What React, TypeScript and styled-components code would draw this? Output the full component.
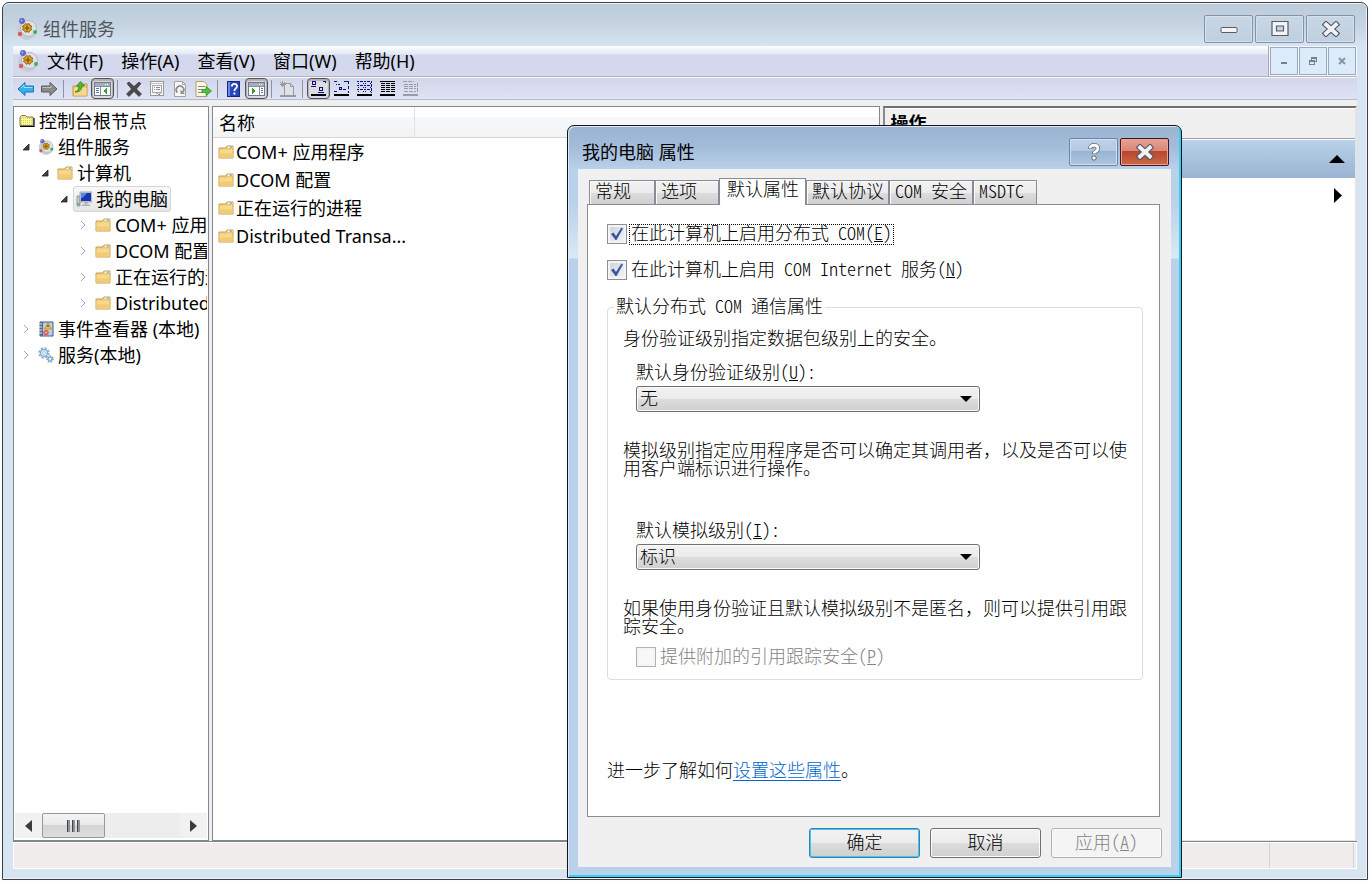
import React from 'react';
import styled, { createGlobalStyle, css } from 'styled-components';

const GlobalStyle = createGlobalStyle`
  *, *::before, *::after { box-sizing: border-box; }
  body {
    margin: 0;
    background: #fdfdfd;
    color: #000;
    font-family: "Noto Sans", "Noto Sans CJK SC", sans-serif;
    font-size: 18px;
    line-height: 24px;
  }
  button, input, select { font: inherit; color: inherit; margin: 0; }
  svg { display: block; flex: none; }
`;

/* ---------- main window ---------- */

const Desktop = styled.div`
  position: relative;
  display: flex;
  min-height: 100vh;
  padding: 2px 3px 3px 2px;
`;

const Window = styled.main`
  flex: 1;
  min-width: 0;
  display: flex;
  flex-direction: column;
  padding: 0 10px 10px;
  border: 1px solid #3c3f44;
  border-radius: 7px 7px 0 0;
  background: linear-gradient(#bccbd9, #c6d4e2 22px, #d7e4f1 44px);
  box-shadow: inset 0 1px 0 #eef4fa, inset -1px -1px 0 #eef4fa;
`;

const TitleBar = styled.header`
  display: flex;
  align-items: center;
  height: 43px;
  padding: 8px 2px 0 3px;
  gap: 5px;
  color: #4d5560;
`;

const Heading = styled.h1`
  flex: 1;
  margin: 0;
  font-size: 18px;
  font-weight: 400;
`;

const CaptionButtons = styled.div`
  display: flex;
  gap: 2px;
`;

const CaptionButton = styled.button`
  display: flex;
  align-items: center;
  justify-content: center;
  width: 49px;
  height: 28px;
  padding: 0;
  border: 1px solid #8493ad;
  border-radius: 2px;
  background: linear-gradient(#c9d7e5, #bfcfdd);
  box-shadow: inset 0 0 0 1px #d5e1ec;
`;

const MenuRow = styled.div`
  display: flex;
  height: 31px;
  border-bottom: 1px solid #b2b2b4;
  background: linear-gradient(#fdfeff, #e3e9f4 8px, #d3d8ec 9px);
`;

const MenuBar = styled.nav`
  display: flex;
  align-items: center;
  flex: 1;
  gap: 18px;
  padding: 0 4px;
  border-right: 1px solid #a9abb0;
`;

const MenuIcon = styled.span`
  margin-right: -10px;
`;

const MenuItem = styled.button`
  padding: 0;
  border: 0;
  background: none;
`;

const MdiButtons = styled.div`
  display: flex;
  gap: 1px;
  padding: 1px;
  background: #f4f8fc;
`;

const MdiButton = styled.button`
  display: flex;
  align-items: center;
  justify-content: center;
  width: 28px;
  height: 28px;
  padding: 0;
  border: 1px solid #9aa9bb;
  background: #dcebf9;
`;

const Toolbar = styled.div`
  display: flex;
  align-items: center;
  height: 23px;
  padding-left: 1px;
  border-top: 1px solid #f8f8fc;
  border-bottom: 1px solid #b4b9cf;
  background: linear-gradient(#d1d6ea, #dfe3f4);
`;

const ToolButton = styled.button<{ $on?: boolean }>`
  display: flex;
  align-items: center;
  justify-content: center;
  width: 23px;
  height: 21px;
  padding: 0;
  border: 0;
  background: none;
  ${p => p.$on && css`
    border: 1px solid #505357;
    border-radius: 4px;
    background: #dcdde2;
    box-shadow: inset 0 1px 1px 1px #aeb0b8;
  `}
`;

const ToolDivider = styled.span`
  width: 1px;
  height: 18px;
  margin: 0 4px 0 3px;
  background: #8f939c;
`;

const Panes = styled.div`
  flex: 1;
  display: flex;
  gap: 3px;
  padding-top: 6px;
  border-bottom: 1px solid #7f858f;
  background: #efefef;
`;

const Pane = styled.section`
  display: flex;
  flex-direction: column;
  min-width: 0;
  border: 1px solid #828790;
  background: #fff;
`;

const TreePane = styled(Pane)`
  width: 196px;
  padding: 1px 1px 2px 0;
`;

const TreeList = styled.ul`
  flex: 1;
  margin: 0;
  padding: 0;
  overflow: hidden;
  list-style: none;
`;

const TreeRow = styled.li<{ $level: number }>`
  display: flex;
  align-items: center;
  height: 26px;
  padding-left: ${p => Math.max(p.$level - 1, 0) * 19 + 5}px;
  white-space: nowrap;
`;

const Toggle = styled.span`
  display: flex;
  flex: none;
  width: 19px;
  padding-left: 3px;
`;

const TreeLabel = styled.span<{ $selected?: boolean }>`
  display: flex;
  align-items: center;
  gap: 4px;
  margin-left: -3px;
  padding: 0 2px;
  border: 1px solid transparent;
  border-radius: 3px;
  ${p => p.$selected && css`
    border-color: #d6d6d6;
    background: linear-gradient(#f9f9f9, #e5e5e5);
  `}
`;

const ScrollTrack = styled.div`
  display: flex;
  height: 25px;
  margin-left: 1px;
  background: #ededed;
`;

const ScrollArrow = styled.button`
  display: flex;
  align-items: center;
  justify-content: center;
  width: 27px;
  padding: 0;
  border: 0;
  background: #f1f1f1;
`;

const ScrollThumb = styled.div`
  display: flex;
  align-items: center;
  justify-content: center;
  width: 63px;
  border: 1px solid #979797;
  border-radius: 2px;
  background: linear-gradient(#f4f4f4, #e8e8e8 50%, #d4d4d4 50%, #dedede);
`;

const ScrollGap = styled.div`
  flex: 1;
`;

const ListPane = styled(Pane)`
  flex: 670 1 0;
`;

const ListTable = styled.table`
  width: 100%;
  border-collapse: collapse;
  table-layout: fixed;
  text-align: left;

  th {
    height: 30px;
    padding: 3px 6px 0;
    border-bottom: 1px solid #d5d5d5;
    background: linear-gradient(#fff 10px, #f6f7f9 10px, #f1f3f5);
    font-weight: 400;
  }
  th:first-child {
    width: 201px;
    border-right: 1px solid #dfe1e4;
  }
  td { height: 28px; padding: 2px 5px 0; }
`;

const ItemName = styled.span`
  display: flex;
  align-items: center;
  gap: 2px;
`;

const ActionsPane = styled.aside`
  flex: 472 1 0;
  min-width: 0;
  border: solid;
  border-width: 2px 2px 1px 2px;
  border-color: #6f6f6f #e3e3e3 #e3e3e3 #8a8a8a;
  background: #fff;
`;

const ActionsTitle = styled.h2`
  margin: 0;
  padding: 2px 5px;
  height: 31px;
  border-top: 1px solid #fff;
  border-bottom: 1px solid #a0a0a0;
  background: #efefef;
  font-size: 18px;
  font-weight: 700;
`;

const ActionsRow = styled.button<{ $header?: boolean }>`
  display: flex;
  align-items: center;
  justify-content: flex-end;
  width: 100%;
  height: ${p => (p.$header ? 38 : 34)}px;
  margin-top: ${p => (p.$header ? 1 : 0)}px;
  padding: 0 ${p => (p.$header ? 10 : 13)}px;
  border: 0;
  background: ${p => (p.$header ? 'linear-gradient(#b9d1ea, #99b4d1)' : 'none')};
`;

const StatusBar = styled.footer`
  display: flex;
  justify-content: flex-end;
  height: 27px;
  padding-right: 2px;
  border: 1px solid #fff;
  background: #f0eceb;
`;

const StatusCell = styled.span`
  width: 85px;
  border: solid #d5d1d0;
  border-width: 0 1px;
`;

/* ---------- properties dialog ---------- */

const Dialog = styled.section`
  position: absolute;
  left: 567px;
  top: 125px;
  width: 615px;
  padding: 0 10px 10px;
  border: 1px solid #10151c;
  border-radius: 7px 7px 0 0;
  background: linear-gradient(#9ab4d2, #a2bbd8 20px, #b9d1ea 44px, #b9d1ea 76px, #d9e9f6 132px, #b9d1ea 133px);
  box-shadow: inset 1px 1px 0 #dfeaf5, inset -2px -2px 0 #35d0f0;
  font-family: "Liberation Mono", "Noto Sans CJK SC", monospace;
  font-weight: 300;
  line-height: 18px;
`;

const DialogTitleBar = styled.header`
  display: flex;
  align-items: center;
  height: 43px;
  padding: 8px 2px 0 4px;
  font-family: "Noto Sans", "Noto Sans CJK SC", sans-serif;
`;

const DialogCaption = styled(CaptionButton)<{ $danger?: boolean }>`
  border-color: #6c84a6;
  background: linear-gradient(#bed2e7, #b4cae2 45%, #98b3d1 45%, #adc6e0);
  box-shadow: inset 0 0 0 1px #cfdfef;
  ${p => p.$danger && css`
    border-color: #4a1520;
    background: linear-gradient(#e5a296, #d98778 45%, #b9432b 45%, #c96a45);
    box-shadow: inset 0 0 0 1px #e3a598;
  `}
`;

const DialogBody = styled.div`
  padding: 9px 11px 9px 9px;
  background: #f0f0f0;
`;

const Tabs = styled.div`
  display: flex;
  align-items: flex-end;
  height: 26px;
  padding-left: 2px;
`;

const Tab = styled.button<{ $width: number; $active?: boolean }>`
  width: ${p => p.$width}px;
  height: 24px;
  padding: 1px 0 0 5px;
  border: 1px solid #898c95;
  border-bottom: 0;
  background: linear-gradient(#f2f2f2, #ebebeb 50%, #dddddd 50%, #cfcfcf);
  box-shadow: inset 1px 1px 0 #fbfbfb;
  line-height: 18px;
  text-align: left;
  white-space: nowrap;
  ${p => p.$active && css`
    position: relative;
    height: 27px;
    margin-bottom: -1px;
    padding: 0 0 2px 7px;
    background: #fff;
  `}
`;

const TabPanel = styled.div`
  padding: 18px 16px 35px 19px;
  border: 1px solid #898c95;
  background: #fff;
`;

/* Latin letters drawn at half the width of a Chinese character */
const Half = styled.span`
  font-family: "Noto Sans CJK SC", sans-serif;
  font-feature-settings: "hwid";
  line-height: 0;
  white-space: pre;
`;

const CheckRow = styled.label<{ $disabled?: boolean }>`
  display: flex;
  align-items: center;
  gap: 2px;
  height: 22px;
  color: ${p => (p.$disabled ? '#838383' : '#000')};
  & + & { margin-top: 14px; }
`;

const CheckBoxWrap = styled.span`
  position: relative;
  width: 20px;
  height: 20px;
`;

const CheckInput = styled.input`
  display: block;
  appearance: none;
  width: 20px;
  height: 20px;
  border: 1px solid #8e8f8f;
  background: linear-gradient(135deg, #cdd2d9, #f6f6f6);
  box-shadow: inset 0 0 0 2px #f4f4f4;
  &:disabled {
    border-color: #b1b1b1;
    background: #f8f8f8;
  }
  & + svg { display: none; }
  &:checked + svg {
    display: block;
    position: absolute;
    inset: 0;
    pointer-events: none;
  }
`;

const CheckText = styled.span<{ $focused?: boolean }>`
  padding: 1px 1px 0;
  border: 1px dotted ${p => (p.$focused ? '#000' : 'transparent')};
  white-space: nowrap;
`;

const Group = styled.fieldset`
  min-width: 0;
  margin: 16px 0 0;
  padding: 0 14px 11px 6px;
  border: 1px solid #d5dfe5;
  border-radius: 4px;
`;

const Legend = styled.legend`
  padding: 2px 2px 0;
`;

const Note = styled.p<{ $top: number }>`
  margin: ${p => p.$top}px 0 0 9px;
`;

const Field = styled.div<{ $top: number }>`
  margin: ${p => p.$top}px 0 0 22px;
`;

const FieldLabel = styled.label`
  display: block;
  margin-bottom: 3px;
`;

const SelectWrap = styled.div`
  position: relative;
  width: 344px;
  svg {
    position: absolute;
    right: 8px;
    top: 10px;
    pointer-events: none;
  }
`;

const Select = styled.select`
  display: block;
  appearance: none;
  width: 100%;
  height: 26px;
  padding: 1px 3px 0;
  border: 1px solid #707070;
  border-radius: 3px;
  background: linear-gradient(#f2f2f2, #ebebeb 50%, #dddddd 50%, #cfcfcf);
  box-shadow: inset 0 0 0 1px #fafafa;
`;

const LearnMore = styled.p`
  margin: 83px 0 0;
  a { color: #0066cc; text-decoration: underline; text-underline-offset: 3px; }
`;

const Actions = styled.div`
  display: flex;
  justify-content: flex-end;
  gap: 10px;
  margin: 11px -2px 0 0;
`;

const PushButton = styled.button<{ $primary?: boolean }>`
  width: 111px;
  height: 30px;
  padding: 1px 0 0;
  border: 1px solid ${p => (p.$primary ? '#3c7fb1' : '#707070')};
  border-radius: 3px;
  background: linear-gradient(#f2f2f2, #ebebeb 50%, #dddddd 50%, #cfcfcf);
  box-shadow: inset 0 0 0 1px ${p => (p.$primary ? '#3fc8f0' : '#fbfbfb')};
  &:disabled {
    border-color: #adb2b5;
    background: #f4f4f4;
    color: #838383;
  }
`;

/* ---------- icons ---------- */

const ComIcon = ({ size = 22 }: { size?: number }) => (
  <svg width={size} height={size} viewBox="0 0 22 22">
    <circle cx="11" cy="12" r="10" fill="#c9ccd4" />
    <circle cx="12.500" cy="10.500" r="8" fill="#dfe1e7" stroke="#b4b8c1" />
    <circle cx="6" cy="3" r="3" fill="#5d68c8" />
    <circle cx="5.400" cy="2.400" r="1" fill="#b5bcf2" />
    <circle cx="4" cy="16" r="2.200" fill="#d4605e" />
    <circle cx="19" cy="14" r="2" fill="#3fae56" />
    <path d="M9.500 5.500l1.500.8 2-.8 .8 1.700 1.900.8-.8 2 .8 1.700-1.900.9-.8 1.700-2-.8-1.700.8-1-1.700-1.700-.9.7-1.700-.7-2 1.700-.8z" fill="#e0a020" stroke="#7a5206" strokeWidth=".8" />
    <path d="M11 7.500v5M8.500 10h5" stroke="#6e4a08" strokeWidth="1.200" />
  </svg>
);

const FolderIcon = () => (
  <svg width="16" height="16" viewBox="0 0 16 16">
    <path d="M1 4h6.500L9 2h6v12H1z" fill="#eec776" stroke="#c9a04c" />
    <path d="M10 2.500h4.500V4H9.500z" fill="#fff" />
    <path d="M11.500 2.500h2.500v1.200h-2.500z" fill="#5aa0dc" />
    <path d="M1.500 5.500h13v8h-13z" fill="#f8d88c" />
    <path d="M1.500 9.500h13v4h-13z" fill="#f0cb78" />
  </svg>
);

const RootFolderIcon = () => (
  <svg width="16" height="16" viewBox="0 0 16 16">
    <path d="M1 12.500V4l1.500-1.500h4L8 4h6v8.500z" fill="#f0e870" stroke="#7b7b6c" />
    <path d="M2 5h11.500v7H2z" fill="#fbf8a8" />
    <path d="M2 5.500h11M2 7.500h11M2 9.500h11M2 11.500h11" stroke="#d8cf3e" strokeDasharray="1 1" />
    <path d="M1 13.500h14V5" fill="none" stroke="#000" strokeWidth="1.200" />
  </svg>
);

const ComputerIcon = () => (
  <svg width="16" height="16" viewBox="0 0 16 16">
    <path d="M1 5h3v10H1z" fill="#c9ccd2" stroke="#878b93" strokeWidth=".8" />
    <path d="M1.500 12h2v2h-2z" fill="#4fb04f" />
    <path d="M4 1h12v10H4z" fill="#d3d6dd" stroke="#9296a3" strokeWidth=".8" />
    <path d="M5 2h10v8H5z" fill="#1a36b0" />
    <path d="M5 2h6L7 6.500 5 7z" fill="#5c86ee" />
    <path d="M8.500 11h3v2h-3zM6 13.500h8v1.500H6z" fill="#a7abb5" />
  </svg>
);

const EventIcon = () => (
  <svg width="16" height="16" viewBox="0 0 16 16">
    <path d="M2 1h13v14H2z" fill="#b9cdea" stroke="#44597f" />
    <path d="M2 1h3v14H2z" fill="#56688c" />
    <path d="M1 3h3M1 6h3M1 9h3M1 12h3" stroke="#e9eef6" />
    <path d="M10 2l3.500 6h-7z" fill="#f6c81e" stroke="#a47f09" strokeWidth=".6" />
    <path d="M10 4v2" stroke="#222" />
    <circle cx="8" cy="11.500" r="2.600" fill="#d84a38" />
    <path d="M7 10.500l2 2m0-2l-2 2" stroke="#fff" strokeWidth=".9" />
  </svg>
);

const GearIcon = () => (
  <svg width="16" height="16" viewBox="0 0 16 16">
    <circle cx="6" cy="6" r="4.300" fill="none" stroke="#8db5d9" strokeWidth="3" strokeDasharray="2 1.370" />
    <circle cx="6" cy="6" r="3.500" fill="#e9f3fb" stroke="#86aed4" strokeWidth="1.400" />
    <circle cx="6" cy="6" r="1.400" fill="#fff" stroke="#9bbcdb" strokeWidth=".8" />
    <circle cx="12" cy="12" r="2.700" fill="none" stroke="#7f9cbc" strokeWidth="2" strokeDasharray="1.400 1.030" />
    <circle cx="12" cy="12" r="1.900" fill="#e4eef7" stroke="#7f9fc2" />
  </svg>
);

const OpenToggle = () => (
  <svg width="8" height="8" viewBox="0 0 8 8"><path d="M7 1v6H1z" fill="#404040" stroke="#222" strokeWidth=".8" /></svg>
);

const ClosedToggle = () => (
  <svg width="8" height="10" viewBox="0 0 8 10"><path d="M2 1l4 4-4 4" fill="none" stroke="#a6a6a6" /></svg>
);

const Caret = ({ dir, big }: { dir: 'up' | 'down' | 'left' | 'right'; big?: boolean }) => {
  const shapes = {
    up: [16, 8, 'M0 8L8 0l8 8z'],
    down: [12, 6, 'M0 0h12L6 6z'],
    left: [7, 12, 'M7 0v12L0 6z'],
    right: [7, 12, 'M0 0v12l7-6z'],
  } as const;
  const [w, h, d] = shapes[dir];
  return (
    <svg width={big ? 8 : w} height={big ? 15 : h} viewBox={`0 0 ${w} ${h}`} preserveAspectRatio="none">
      <path d={d} fill={dir === 'left' || (dir === 'right' && !big) ? '#3b3b3b' : '#000'} />
    </svg>
  );
};

const CloseGlyph = () => (
  <svg width="20" height="16" viewBox="0 0 20 16">
    <path d="M5 3.500l10 9M15 3.500l-10 9" stroke="#4b5366" strokeWidth="6" strokeLinecap="square" />
    <path d="M5 3.500l10 9M15 3.500l-10 9" stroke="#f2f2f2" strokeWidth="3.800" strokeLinecap="square" />
  </svg>
);

const MinGlyph = () => (
  <svg width="18" height="16" viewBox="0 0 18 16">
    <rect x="1" y="6.500" width="16" height="5" rx="1" fill="#f4f4f4" stroke="#565c6c" />
  </svg>
);

const MaxGlyph = () => (
  <svg width="18" height="16" viewBox="0 0 18 16">
    <path d="M1 .5h16v14H1zM5.500 5v5h7V5z" fill="#f4f4f4" fillRule="evenodd" stroke="#565c6c" strokeWidth="1.200" />
  </svg>
);

const HelpGlyph = () => (
  <svg width="16" height="18" viewBox="0 0 16 18">
    <path d="M4.200 5.800C4.200 1.200 12 1.200 12 5.500c0 3-4 2.800-4 5.500" fill="none" stroke="#5b6577" strokeWidth="4.400" />
    <rect x="5.500" y="12.500" width="5" height="5" rx="2" fill="#5b6577" />
    <path d="M4.200 5.200C4.200 1.200 12 1.200 12 5.500c0 3-4 2.800-4 5" fill="none" stroke="#fafafa" strokeWidth="2.800" />
    <rect x="6.400" y="13.500" width="3.200" height="3" rx="1" fill="#fafafa" />
  </svg>
);

const ArrowIcon = ({ forward }: { forward?: boolean }) => (
  <svg width="18" height="16" viewBox="0 0 18 16">
    <path
      d={forward ? 'M17 8l-7-6.500V5H1.500v6H10v3.500z' : 'M1 8l7-6.500V5h8.500v6H8v3.500z'}
      fill={forward ? '#8b8b8b' : '#35b1f2'}
      stroke={forward ? '#5a5a5a' : '#1a72b8'}
    />
    <path d={forward ? 'M2.500 6.500H11V4.500' : 'M4 7l3-3v2.500h8.500'} fill="none" stroke={forward ? '#c2c2c2' : '#9fe0ff'} />
  </svg>
);

const UpFolderIcon = () => (
  <svg width="18" height="18" viewBox="0 0 18 18">
    <path d="M2 6h7l2-2h5v12H2z" fill="#f0c974" stroke="#c39a3c" />
    <path d="M3 8h12.500v7.500H3z" fill="#f8d890" />
    <path d="M4 12c3-1 4-3 4-6H5.500L9.500 1.500l4 4.500H11c0 4-3 6.500-7 6z" fill="#4cbc34" stroke="#237a1a" strokeWidth=".7" />
  </svg>
);

const PaneIcon = ({ right }: { right?: boolean }) => (
  <svg width="17" height="15" viewBox="0 0 17 15" shapeRendering="crispEdges">
    <rect x=".5" y="1.500" width="16" height="13" fill="#fff" stroke="#747a86" />
    <path d="M1 2h15v3H1z" fill="#a5aebd" />
    <path d="M11 3.500h1M13 3.500h1" stroke="#fff" />
    <path d="M1 5.500h15" stroke="#8a909c" />
    <path d={right ? 'M11.500 6v8' : 'M6.500 6v8'} stroke="#8a909c" />
    <path d={right ? 'M13 7.500h2M13 9.500h2M13 11.500h2' : 'M2 7.500h3M2 9.500h3M2 11.500h3'} stroke="#4f7cb8" />
    <path d={right ? 'M4 7v6l4-3z' : 'M13 7v6L9 10z'} fill="#2da32d" />
  </svg>
);

const DeleteIcon = () => (
  <svg width="18" height="18" viewBox="0 0 18 18">
    <path d="M2 3.500L4 2l5 4.500L14 2l2 1.500L11.500 9l5 5-2.500 2.500L9 11.500 4 16.500 1.500 14l5-5z" fill="#4a4a4a" stroke="#2f2f2f" strokeWidth=".6" />
  </svg>
);

const PropertiesIcon = () => (
  <svg width="16" height="16" viewBox="0 0 16 16" shapeRendering="crispEdges">
    <rect x="1.500" y=".5" width="13" height="14" fill="#fafafa" stroke="#9a9a9a" />
    <path d="M2 2.500h12" stroke="#c2c2c2" />
    <rect x="3.500" y="4.500" width="9" height="7" fill="none" stroke="#a8a8a8" />
    <path d="M5 6.500h1M7 6.500h4M5 8.500h1M7 8.500h4M9 13h2" stroke="#8f8f8f" />
    <path d="M7 12.500h2M10 12.500h2" stroke="#7fc6e8" />
  </svg>
);

const RefreshIcon = () => (
  <svg width="16" height="16" viewBox="0 0 16 16">
    <path d="M2.500.5h8l3 3v12h-11z" fill="#f6f6f6" stroke="#a2a2a2" />
    <path d="M10.500.5v3h3" fill="none" stroke="#a2a2a2" />
    <path d="M5.500 11.500A3.700 3.700 0 1 1 11 11" fill="none" stroke="#8c8c8c" strokeWidth="1.800" />
    <path d="M8.500 8.500v4.500H13z" fill="#8c8c8c" />
  </svg>
);

const ExportIcon = () => (
  <svg width="18" height="16" viewBox="0 0 18 16">
    <path d="M2 .5h8l3 3v12H2z" fill="#fdf8d8" stroke="#a8a078" />
    <path d="M4 5.500h7M4 8.500h5M4 11.500h5" stroke="#7a86a8" />
    <path d="M8 8.500h4V5.500l5.500 4.500-5.500 4.500v-3H8z" fill="#4cc238" stroke="#2a8a1e" strokeWidth=".7" />
  </svg>
);

const HelpIcon = () => (
  <svg width="16" height="18" viewBox="0 0 16 18">
    <rect x="1.500" y="1.500" width="12" height="15" fill="#2848b8" stroke="#16297a" />
    <path d="M2 2h2v14H2z" fill="#6d8ae8" />
    <path d="M5.800 6.500C5.800 3 11 3 11 6.300c0 2.200-2.600 2-2.600 4.700" fill="none" stroke="#fff" strokeWidth="1.800" />
    <path d="M7.400 12.500h2v2h-2z" fill="#fff" />
  </svg>
);

const NewIcon = () => (
  <svg width="18" height="18" viewBox="0 0 18 18" shapeRendering="crispEdges">
    <path d="M5.500 15V3.500h6l3 3V15" fill="#dfe1e8" stroke="#9a9a9a" />
    <path d="M11.500 3.500v3h3" fill="none" stroke="#9a9a9a" />
    <path d="M3.500 1v6M1 4.500h6M1.500 2.500l4 4M5.500 2.500l-4 4" stroke="#9a9a9a" />
    <path d="M1 16h16" stroke="#9a9a9a" strokeWidth="2" />
  </svg>
);

const ViewIcon = ({ kind }: { kind: 'large' | 'small' | 'list' | 'detail' | 'custom' }) => (
  <svg width="17" height="17" viewBox="0 0 17 17" shapeRendering="crispEdges">
    {kind === 'large' && (
      <path d="M2.500 1.500h3v3h-3zM9.500 7.500h3v3h-3zM13 1.500h2M15.500 1v2M1 6.500h5M8 12.500h6" fill="none" stroke="#10107a" />
    )}
    {kind === 'small' && (
      <path d="M1 1.500h3M3 4.500h1M5 4.500h2M11 1.500h4M15.500 1v3M15.500 6v3M6.500 7.500h2v2h-2zM10 9.500h3M1 11.500h3M15.500 11v2" fill="none" stroke="#10107a" />
    )}
    {kind === 'list' && (
      <>
        <path d="M1 1.500h15M1 5.500h15M1 9.500h15" stroke="#10107a" strokeDasharray="2 1 3 1" />
        <path d="M2 3.500h14M2 7.500h14M2 11.500h14" stroke="#10107a" strokeDasharray="1 4 1 1" />
        <path d="M15.500 2v11" stroke="#10107a" strokeDasharray="1 1" />
      </>
    )}
    {kind === 'detail' && (
      <>
        <path d="M1 1.500h15" stroke="#000" />
        <path d="M2 3.500h14M2 5.500h14M2 7.500h14M2 9.500h14M2 11.500h14" stroke="#000" strokeDasharray="4 1" />
      </>
    )}
    {kind === 'custom' && (
      <path d="M1 1.500h11M2 4.500h12M2 6.500h12M2 8.500h12M2 11.500h12M15.500 3v9" fill="none" stroke="#9c9ca4" strokeDasharray="4 1" />
    )}
    <path d="M1 15h15" stroke={kind === 'custom' ? '#9c9ca4' : '#000'} strokeWidth="2" />
  </svg>
);

/* ---------- content ---------- */

const treeRows = [
  { level: 0, label: '控制台根节点', icon: <RootFolderIcon /> },
  { level: 1, label: '组件服务', icon: <ComIcon size={16} />, open: true },
  { level: 2, label: '计算机', icon: <FolderIcon />, open: true },
  { level: 3, label: '我的电脑', icon: <ComputerIcon />, open: true, selected: true },
  { level: 4, label: 'COM+ 应用程序', icon: <FolderIcon /> },
  { level: 4, label: 'DCOM 配置', icon: <FolderIcon /> },
  { level: 4, label: '正在运行的进程', icon: <FolderIcon /> },
  { level: 4, label: 'Distributed Transaction Coordinator', icon: <FolderIcon /> },
  { level: 1, label: '事件查看器 (本地)', icon: <EventIcon /> },
  { level: 1, label: '服务(本地)', icon: <GearIcon /> },
];

const listItems = ['COM+ 应用程序', 'DCOM 配置', '正在运行的进程', 'Distributed Transa...'];
const menuItems = ['文件(F)', '操作(A)', '查看(V)', '窗口(W)', '帮助(H)'];

type Tool = { name: string; icon: React.ReactNode; on?: boolean };
const toolGroups: Tool[][] = [
  [{ name: '后退', icon: <ArrowIcon /> }, { name: '前进', icon: <ArrowIcon forward /> }],
  [{ name: '上移一级', icon: <UpFolderIcon /> }, { name: '显示控制台树', icon: <PaneIcon />, on: true }],
  [
    { name: '删除', icon: <DeleteIcon /> },
    { name: '属性', icon: <PropertiesIcon /> },
    { name: '刷新', icon: <RefreshIcon /> },
    { name: '导出列表', icon: <ExportIcon /> },
  ],
  [{ name: '帮助', icon: <HelpIcon /> }, { name: '显示操作窗格', icon: <PaneIcon right />, on: true }],
  [{ name: '新建', icon: <NewIcon /> }],
  [
    { name: '大图标', icon: <ViewIcon kind="large" />, on: true },
    { name: '小图标', icon: <ViewIcon kind="small" /> },
    { name: '列表', icon: <ViewIcon kind="list" /> },
    { name: '详细信息', icon: <ViewIcon kind="detail" /> },
    { name: '自定义', icon: <ViewIcon kind="custom" /> },
  ],
];

const tabs = [
  { id: 'general', width: 66, text: '常规' },
  { id: 'options', width: 64, text: '选项' },
  { id: 'defaults', width: 87, text: '默认属性', active: true },
  { id: 'protocols', width: 83, text: '默认协议' },
  { id: 'security', width: 84, text: <><Half>COM </Half>安全</> },
  { id: 'msdtc', width: 64, text: <Half>MSDTC</Half> },
];

const Key = ({ children }: { children: string }) => <Half>(<u>{children}</u>)</Half>;

type CheckProps = { children: React.ReactNode; checked?: boolean; disabled?: boolean; focused?: boolean };
const Check = ({ children, checked, disabled, focused }: CheckProps) => (
  <CheckRow $disabled={disabled}>
    <CheckBoxWrap>
      <CheckInput type="checkbox" defaultChecked={checked} disabled={disabled} />
      <svg width="20" height="20" viewBox="0 0 20 20">
        <path d="M4 10l2.500-1.500L9 12l5.500-8.500L16 4.500 9.500 16H8.500z" fill="#3b56a0" />
      </svg>
    </CheckBoxWrap>
    <CheckText $focused={focused}>{children}</CheckText>
  </CheckRow>
);

const PropertiesDialog = () => (
  <Dialog role="dialog" aria-labelledby="dialog-title">
    <DialogTitleBar>
      <Heading as="h2" id="dialog-title">我的电脑 属性</Heading>
      <CaptionButtons>
        <DialogCaption aria-label="帮助"><HelpGlyph /></DialogCaption>
        <DialogCaption $danger aria-label="关闭"><CloseGlyph /></DialogCaption>
      </CaptionButtons>
    </DialogTitleBar>
    <DialogBody>
      <Tabs role="tablist">
        {tabs.map(t => (
          <Tab key={t.id} role="tab" aria-selected={!!t.active} $width={t.width} $active={t.active}>{t.text}</Tab>
        ))}
      </Tabs>
      <TabPanel role="tabpanel">
        <Check checked focused>在此计算机上启用分布式<Half> COM</Half><Key>E</Key></Check>
        <Check checked>在此计算机上启用<Half> COM Internet </Half>服务<Key>N</Key></Check>
        <Group>
          <Legend>默认分布式<Half> COM </Half>通信属性</Legend>
          <Note $top={14}>身份验证级别指定数据包级别上的安全。</Note>
          <Field $top={16}>
            <FieldLabel htmlFor="auth-level">默认身份验证级别<Key>U</Key><Half>:</Half></FieldLabel>
            <SelectWrap>
              <Select id="auth-level"><option>无</option></Select>
              <Caret dir="down" />
            </SelectWrap>
          </Field>
          <Note $top={31}>模拟级别指定应用程序是否可以确定其调用者，以及是否可以使用客户端标识进行操作。</Note>
          <Field $top={44}>
            <FieldLabel htmlFor="impersonation">默认模拟级别<Key>I</Key><Half>:</Half></FieldLabel>
            <SelectWrap>
              <Select id="impersonation"><option>标识</option></Select>
              <Caret dir="down" />
            </SelectWrap>
          </Field>
          <Note $top={31}>如果使用身份验证且默认模拟级别不是匿名，则可以提供引用跟踪安全。</Note>
          <Field $top={9}>
            <Check disabled>提供附加的引用跟踪安全<Key>P</Key></Check>
          </Field>
        </Group>
        <LearnMore>进一步了解如何<a href="#properties">设置这些属性</a>。</LearnMore>
      </TabPanel>
      <Actions>
        <PushButton $primary>确定</PushButton>
        <PushButton>取消</PushButton>
        <PushButton disabled>应用<Key>A</Key></PushButton>
      </Actions>
    </DialogBody>
  </Dialog>
);

export default function App() {
  return (
    <Desktop>
      <GlobalStyle />
      <Window>
        <TitleBar>
          <ComIcon />
          <Heading>组件服务</Heading>
          <CaptionButtons>
            <CaptionButton aria-label="最小化"><MinGlyph /></CaptionButton>
            <CaptionButton aria-label="最大化"><MaxGlyph /></CaptionButton>
            <CaptionButton aria-label="关闭"><CloseGlyph /></CaptionButton>
          </CaptionButtons>
        </TitleBar>
        <MenuRow>
          <MenuBar>
            <MenuIcon><ComIcon /></MenuIcon>
            {menuItems.map(item => <MenuItem key={item}>{item}</MenuItem>)}
          </MenuBar>
          <MdiButtons>
            <MdiButton aria-label="最小化子窗口">
              <svg width="10" height="10" viewBox="0 0 10 10"><path d="M2 7h6" stroke="#75808f" strokeWidth="2" /></svg>
            </MdiButton>
            <MdiButton aria-label="还原子窗口">
              <svg width="10" height="10" viewBox="0 0 10 10" shapeRendering="crispEdges">
                <path d="M3.500 3.500v-2h5v4h-2M1.500 4.500h5v4h-5zM3 2h6M1 5h6" fill="none" stroke="#75808f" />
              </svg>
            </MdiButton>
            <MdiButton aria-label="关闭子窗口">
              <svg width="10" height="10" viewBox="0 0 10 10"><path d="M2 2l6 6M8 2L2 8" stroke="#8a94a1" strokeWidth="2" /></svg>
            </MdiButton>
          </MdiButtons>
        </MenuRow>
        <Toolbar>
          {toolGroups.map((group, i) => (
            <React.Fragment key={i}>
              {i > 0 && <ToolDivider />}
              {group.map(t => <ToolButton key={t.name} $on={t.on} aria-label={t.name}>{t.icon}</ToolButton>)}
            </React.Fragment>
          ))}
        </Toolbar>
        <Panes>
          <TreePane>
            <TreeList>
              {treeRows.map(r => (
                <TreeRow key={r.label} $level={r.level}>
                  {r.level > 0 && <Toggle>{r.open ? <OpenToggle /> : <ClosedToggle />}</Toggle>}
                  <TreeLabel $selected={r.selected}>{r.icon}{r.label}</TreeLabel>
                </TreeRow>
              ))}
            </TreeList>
            <ScrollTrack>
              <ScrollArrow aria-label="向左滚动"><Caret dir="left" /></ScrollArrow>
              <ScrollThumb>
                <svg width="15" height="12" viewBox="0 0 15 12">
                  <path d="M1 0h3v12H1zM6 0h3v12H6zM11 0h3v12h-3z" fill="#8d9196" />
                  <path d="M1.500 0v12M6.500 0v12M11.500 0v12" stroke="#3f4347" />
                </svg>
              </ScrollThumb>
              <ScrollGap />
              <ScrollArrow aria-label="向右滚动"><Caret dir="right" /></ScrollArrow>
            </ScrollTrack>
          </TreePane>
          <ListPane>
            <ListTable>
              <thead>
                <tr><th scope="col">名称</th><th aria-label="空" /></tr>
              </thead>
              <tbody>
                {listItems.map(item => (
                  <tr key={item}><td colSpan={2}><ItemName><FolderIcon />{item}</ItemName></td></tr>
                ))}
              </tbody>
            </ListTable>
          </ListPane>
          <ActionsPane>
            <ActionsTitle>操作</ActionsTitle>
            <ActionsRow $header aria-label="折叠"><Caret dir="up" /></ActionsRow>
            <ActionsRow aria-label="更多操作"><Caret dir="right" big /></ActionsRow>
          </ActionsPane>
        </Panes>
        <StatusBar><StatusCell /></StatusBar>
      </Window>
      <PropertiesDialog />
    </Desktop>
  );
}
